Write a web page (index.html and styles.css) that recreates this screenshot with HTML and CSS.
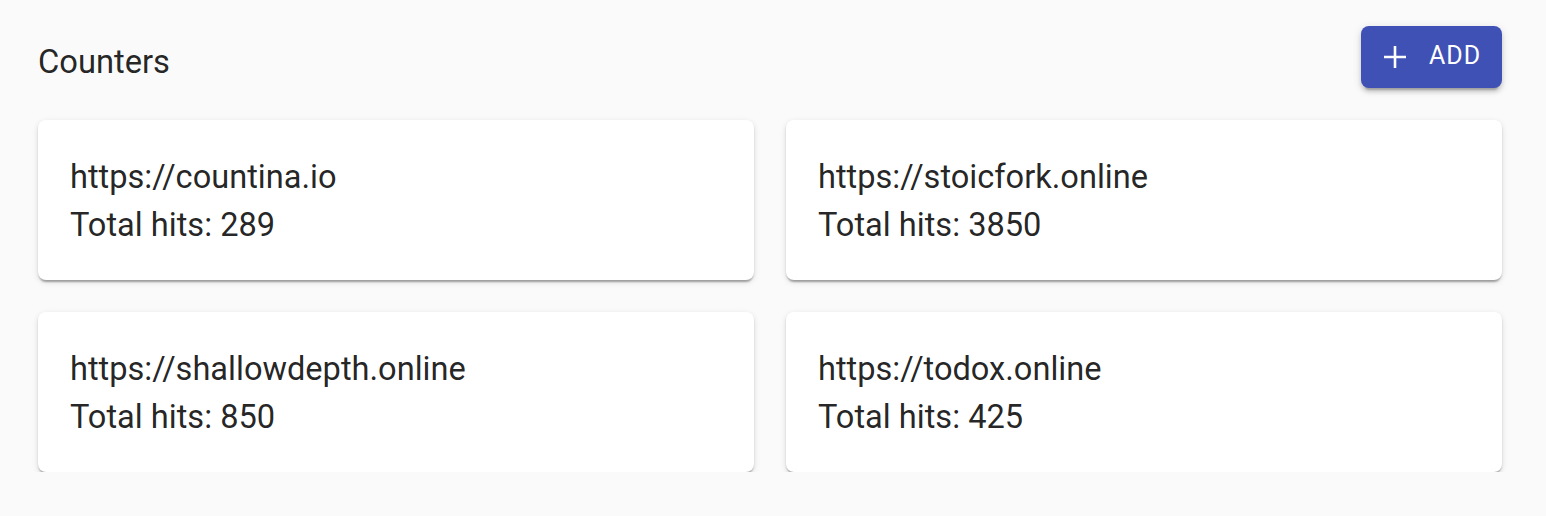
FILE: index.html
```html
<!DOCTYPE html>
<html>
<head>
<meta charset="utf-8">
<link rel="stylesheet" href="styles.css">
</head>
<body>
<div class="page">
  <header class="header">
    <h1 class="title">Counters</h1>
    <button class="add-btn">
      <svg class="plus" viewBox="0 0 24 24" width="24" height="24"><path d="M12 1v22M1 12h22" stroke="#fff" stroke-width="2.6" fill="none"/></svg>
      <span>ADD</span>
    </button>
  </header>
  <div class="grid">
    <div class="card"><div class="url">https://countina.io</div><div class="hits">Total hits: 289</div></div>
    <div class="card"><div class="url">https://stoicfork.online</div><div class="hits">Total hits: 3850</div></div>
    <div class="card"><div class="url">https://shallowdepth.online</div><div class="hits">Total hits: 850</div></div>
    <div class="card"><div class="url">https://todox.online</div><div class="hits">Total hits: 425</div></div>
  </div>
</div>
</body>
</html>
```

FILE: styles.css
```css
html, body {
  margin: 0;
  background: #fafafa;
  font-family: Roboto, "Liberation Sans", sans-serif;
  color: rgba(0,0,0,0.87);
}
.page {
  padding: 26px 44px 0 38px;
}
.header {
  display: flex;
  justify-content: space-between;
  align-items: center;
  height: 62px;
}
.title {
  margin: 0;
  font-size: 32.7px;
  font-weight: 400;
  line-height: 1.2;
  position: relative;
  top: 6px;
}
.add-btn {
  display: flex;
  align-items: center;
  gap: 22px;
  height: 62px;
  width: 141px;
  padding: 0 0 0 22px;
  border: none;
  border-radius: 8px;
  background: #3f51b5;
  color: #fff;
  font-family: Roboto, "Liberation Sans", sans-serif;
  font-size: 25px;
  font-weight: 400;
  letter-spacing: 1px;
  box-shadow: 0 6px 2px -4px rgba(0,0,0,0.2), 0 4px 4px 0 rgba(0,0,0,0.14), 0 2px 10px 0 rgba(0,0,0,0.12);
}
.add-btn span { position: relative; top: -2px; }
.plus { width: 24px; height: 24px; }
.grid {
  margin-top: 32px;
  display: grid;
  grid-template-columns: 1fr 1fr;
  gap: 32px;
}
.card {
  background: #fff;
  border-radius: 8px;
  padding: 33px 32px 31px;
  font-size: 32.6px;
  line-height: 48px;
  box-shadow: 0 4px 2px -2px rgba(0,0,0,0.2), 0 2px 2px 0 rgba(0,0,0,0.14), 0 2px 6px 0 rgba(0,0,0,0.12);
}
```
